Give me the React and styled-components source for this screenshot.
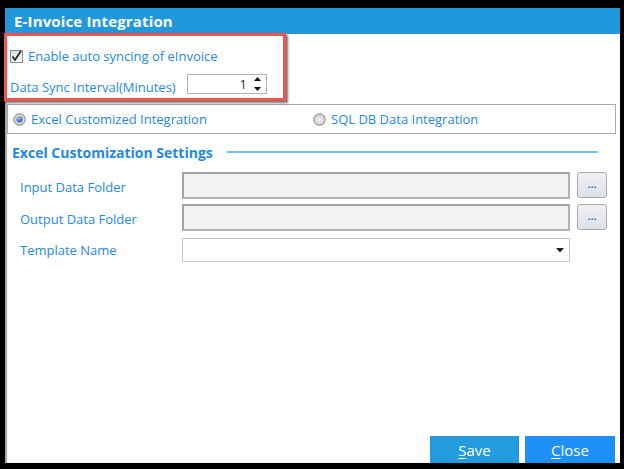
import React from "react";
import styled, { createGlobalStyle } from "styled-components";

const Global = createGlobalStyle`
  html, body { margin: 0; padding: 0; background: #000; }
  body { font-family: "Segoe UI", "Open Sans", "Noto Sans", sans-serif; }
  * { box-sizing: border-box; }
`;

const BLUE = "#1f89e6";

const Page = styled.div`
  width: 624px;
  height: 469px;
  background: #000;
  padding: 8px 4px 6px 5px;
  display: flex;
`;

const Window = styled.div`
  position: relative;
  flex: 1;
  background: #fff;
  display: flex;
  flex-direction: column;
  box-shadow: inset 2px 0 1px rgba(0, 0, 0, 0.35);
`;

const TitleBar = styled.div`
  height: 26px;
  background: #2298dc;
  color: #fff;
  font-weight: 700;
  font-size: 15px;
  display: flex;
  align-items: center;
  padding-left: 9px;
  letter-spacing: 0.15px;
`;

const Body = styled.div`
  flex: 1;
  display: flex;
  flex-direction: column;
  padding: 0 4px 0 2px;
`;

const Text = styled.span`
  color: ${BLUE};
  font-size: 13px;
  white-space: nowrap;
`;

const CheckRow = styled.label`
  display: flex;
  align-items: center;
  gap: 5px;
  height: 18px;
  margin-top: 13px;
  padding-left: 3px;
`;

const IntervalRow = styled.div`
  display: flex;
  align-items: flex-end;
  height: 20px;
  margin-top: 9px;
  padding-left: 3px;
  gap: 11px;
`;

const IntervalLabel = styled(Text)`
  line-height: 17px;
  margin-bottom: -2px;
`;

const Spinner = styled.div`
  width: 80px;
  height: 20px;
  border: 1px solid #b3b3b3;
  display: flex;
  align-items: center;
  justify-content: flex-end;
  padding-right: 4px;
  gap: 6px;
  font-size: 12px;
  color: #222;
`;

const SpinValue = styled.span`
  font-family: "Segoe UI", "Open Sans", sans-serif;
`;

const GroupBox = styled.div`
  margin-top: 10px;
  height: 30px;
  border: 1px solid #a9a9b6;
  display: flex;
  align-items: center;
  padding-left: 5px;
`;

const RadioOption = styled.label`
  display: flex;
  align-items: center;
  gap: 5px;
  width: ${(p) => p.$width || "auto"};
`;

const SectionHeader = styled.div`
  display: flex;
  align-items: center;
  margin-top: 9px;
  height: 18px;
  padding-left: 5px;
  padding-right: 18px;
  gap: 14px;
`;

const SectionTitle = styled.span`
  color: ${BLUE};
  font-weight: 700;
  font-size: 14px;
  white-space: nowrap;
`;

const SectionLine = styled.div`
  flex: 1;
  height: 2px;
  background: #7cbcf6;
`;

const FieldGrid = styled.div`
  margin-top: 11px;
  display: grid;
  grid-template-columns: 155px 388px 30px;
  column-gap: 7px;
  row-gap: 5px;
  padding-left: 13px;
  align-items: center;
`;

const FieldLabel = styled(Text)`
  padding-top: 2px;
`;

const PathInput = styled.div`
  height: 27px;
  background: #f3f3f4;
  border: 2px solid #a2a2a2;
  border-right-color: #b4b4b4;
  border-bottom-color: #b4b4b4;
`;

const BrowseButton = styled.button`
  height: 26px;
  width: 30px;
  border: 1px solid #a9abb1;
  border-radius: 3px;
  background: linear-gradient(#eff1f4, #dde0e6);
  color: ${BLUE};
  font-size: 11px;
  font-weight: 700;
  line-height: 1;
  padding: 0 0 2px;
  display: flex;
  align-items: center;
  justify-content: center;
  align-self: start;
`;

const Select = styled.div`
  height: 24px;
  border: 1px solid #c6c6c6;
  background: #fff;
  display: flex;
  align-items: center;
  justify-content: flex-end;
  padding-right: 5px;
  margin-top: 2px;
`;

const Footer = styled.div`
  margin-top: auto;
  display: flex;
  justify-content: flex-end;
  gap: 6px;
  padding-right: 1px;
`;

const ActionButton = styled.button`
  width: ${(p) => (p.$wide ? "90px" : "89px")};
  height: 27px;
  border: 1px solid ${(p) => p.$bg};
  background: ${(p) => p.$bg};
  color: #fff;
  font-family: "Segoe UI", "Open Sans", sans-serif;
  font-size: 15px;
  padding: 0;
  u { text-decoration-thickness: 1px; text-underline-offset: 2px; }
`;

const Highlight = styled.div`
  position: absolute;
  left: -1px;
  top: 25px;
  width: 282px;
  height: 68px;
  border: 3px solid #f2534e;
  box-shadow: 2px 2px 2px rgba(0, 0, 0, 0.55);
  pointer-events: none;
`;

const CheckBoxIcon = () => (
  <svg width="13" height="13" viewBox="0 0 13 13">
    <defs>
      <linearGradient id="cb" x1="0" y1="0" x2="1" y2="1">
        <stop offset="0" stopColor="#dcdcdc" />
        <stop offset="1" stopColor="#fafafa" />
      </linearGradient>
    </defs>
    <rect x="0.5" y="0.5" width="12" height="12" fill="url(#cb)" stroke="#8e8f8f" />
    <path d="M2.5 6.5 L5 10 L11 0.8" fill="none" stroke="#2a2a2a" strokeWidth="1.8" />
  </svg>
);

const RadioIcon = ({ checked }) => (
  <svg width="13" height="13" viewBox="0 0 13 13">
    <defs>
      <radialGradient id="rg" cx="0.5" cy="0.5" r="0.5">
        <stop offset="0" stopColor="#f4f4f4" />
        <stop offset="1" stopColor="#c8c8c8" />
      </radialGradient>
      <radialGradient id="rb" cx="0.4" cy="0.35" r="0.6">
        <stop offset="0" stopColor="#a8c4f0" />
        <stop offset="1" stopColor="#2d58b0" />
      </radialGradient>
    </defs>
    <circle cx="6.5" cy="6.5" r="5.8" fill="url(#rg)" stroke="#8c8c8c" strokeWidth="1" />
    {checked && <circle cx="6.5" cy="6.5" r="3" fill="url(#rb)" />}
  </svg>
);

const SpinArrows = () => (
  <svg width="9" height="16" viewBox="0 0 9 16">
    <path d="M4.5 1 L8 5 L1 5 Z" fill="#111" />
    <path d="M1 11 L8 11 L4.5 15 Z" fill="#111" />
  </svg>
);

const DropArrow = () => (
  <svg width="8" height="5" viewBox="0 0 8 5">
    <path d="M0 0 L8 0 L4 4.5 Z" fill="#222" />
  </svg>
);

export default function App() {
  return (
    <>
      <Global />
      <Page>
        <Window>
          <TitleBar>E-Invoice Integration</TitleBar>
          <Body>
            <CheckRow>
              <CheckBoxIcon />
              <Text>Enable auto syncing of eInvoice</Text>
            </CheckRow>
            <IntervalRow>
              <IntervalLabel>Data Sync Interval(Minutes)</IntervalLabel>
              <Spinner>
                <SpinValue>1</SpinValue>
                <SpinArrows />
              </Spinner>
            </IntervalRow>
            <GroupBox>
              <RadioOption $width="300px">
                <RadioIcon checked />
                <Text>Excel Customized Integration</Text>
              </RadioOption>
              <RadioOption>
                <RadioIcon />
                <Text>SQL DB Data Integration</Text>
              </RadioOption>
            </GroupBox>
            <SectionHeader>
              <SectionTitle>Excel Customization Settings</SectionTitle>
              <SectionLine />
            </SectionHeader>
            <FieldGrid>
              <FieldLabel>Input Data Folder</FieldLabel>
              <PathInput />
              <BrowseButton>...</BrowseButton>
              <FieldLabel>Output Data Folder</FieldLabel>
              <PathInput />
              <BrowseButton>...</BrowseButton>
              <FieldLabel>Template Name</FieldLabel>
              <Select>
                <DropArrow />
              </Select>
              <span />
            </FieldGrid>
            <Footer>
              <ActionButton $bg="#239bdc">
                <u>S</u>ave
              </ActionButton>
              <ActionButton $bg="#1f8ff8" $wide>
                <u>C</u>lose
              </ActionButton>
            </Footer>
          </Body>
          <Highlight />
        </Window>
      </Page>
    </>
  );
}
